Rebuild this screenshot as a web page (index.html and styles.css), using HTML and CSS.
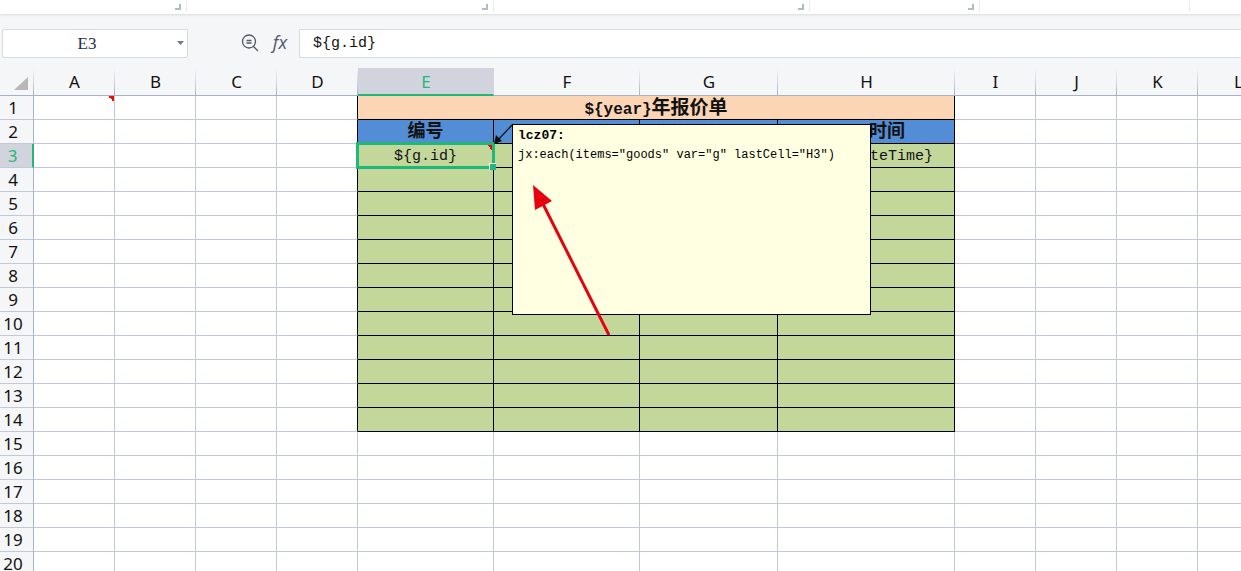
FILE: index.html
```html
<!DOCTYPE html>
<html lang="zh-CN">
<head>
<meta charset="utf-8">
<title>报价单</title>
<link rel="stylesheet" href="styles.css">
</head>
<body>
<div class="ribbon">
  <div class="group group-a"><i class="launcher"></i></div>
  <div class="group group-b"><i class="launcher"></i></div>
  <div class="group group-c"><i class="launcher"></i></div>
  <div class="group group-d"><i class="launcher"></i></div>
  <div class="group group-e"></div>
</div>
<div class="formula-bar">
  <div class="name-box">
    <input class="name-input" aria-label="名称框" value="E3">
    <button class="name-drop" aria-label="选择名称"><svg width="8" height="5" viewBox="0 0 8 5"><path d="M1 0h7L4.500 4z" fill="#6d7694"/></svg></button>
  </div>
  <div class="tools">
    <button class="tool" aria-label="查找"><svg width="18" height="18" viewBox="0 0 18 18" fill="none" stroke="#4f586e" stroke-width="1.3"><circle cx="8" cy="7.500" r="6.500"/><path d="M12.500 12.500l4.500 4.500M5.500 6.500h5M5.500 9h5"/></svg></button>
    <button class="tool fx" aria-label="插入函数">fx</button>
  </div>
  <input class="formula" aria-label="编辑栏" value="${g.id}">
</div>
<main class="sheet">
  <table class="grid">
    <colgroup><col class="c-head"><col class="c-std"><col class="c-std"><col class="c-std"><col class="c-std"><col class="c-e"><col class="c-f"><col class="c-g"><col class="c-h"><col class="c-std"><col class="c-std"><col class="c-std"><col class="c-std"></colgroup>
    <thead><tr><th class="corner"><svg width="14" height="14" viewBox="0 0 14 14"><path d="M14 0v13H0z" fill="#b8b8b8"/></svg></th><th>A</th><th>B</th><th>C</th><th>D</th><th class="active">E</th><th>F</th><th>G</th><th>H</th><th>I</th><th>J</th><th>K</th><th>L</th></tr></thead>
    <tbody>
      <tr><th>1</th><td class="noted"></td><td></td><td></td><td class="edge"></td><td class="title" colspan="4">${year}<span class="han">年报价单</span></td><td></td><td></td><td></td><td></td></tr>
      <tr><th>2</th><td></td><td></td><td></td><td class="edge"></td><td class="label"><span class="han">编号</span></td><td class="label"></td><td class="label"></td><td class="label tail-label"><span class="han">时间</span></td><td></td><td></td><td></td><td></td></tr>
      <tr><th class="active">3</th><td></td><td></td><td></td><td class="edge"></td><td class="item selected">${g.id}</td><td class="item"></td><td class="item"></td><td class="item tail-item">teTime}</td><td></td><td></td><td></td><td></td></tr>
    </tbody>
    <tbody id="rows"></tbody>
  </table>
  <svg class="pointer" width="20" height="22" viewBox="0 0 20 22"><path d="M19 1L4 17" stroke="#111" stroke-width="1.300"/><path d="M1 20l2-9 6 6z" fill="#111"/></svg>
  <aside class="note"><b>lcz07:</b><p>jx:each(items="goods" var="g" lastCell="H3")</p></aside>
  <svg class="arrow" width="80" height="152" viewBox="0 0 80 152"><path d="M13 19L79 150" stroke="#e60012" stroke-width="3"/><path d="M3 0l19 16-17 9z" fill="#e60012"/></svg>
</main>
<script src="sheet.js"></script>
</body>
</html>
```

FILE: styles.css
```css
* { box-sizing: border-box; }
body {
  margin: 0;
  height: 100vh;
  overflow: hidden;
  display: flex;
  flex-direction: column;
  background: #f5f6f8;
  font-family: "Noto Sans", "Noto Sans CJK SC", sans-serif;
  color: #111;
}
button, input { font: inherit; border: 0; padding: 0; margin: 0; background: none; color: inherit; outline: 0; }
button { display: flex; align-items: center; justify-content: center; }

.ribbon { display: flex; flex: none; height: 14px; background: #fff; box-shadow: 0 1px 2px #d9dadc; }
.group { display: flex; flex: none; justify-content: flex-end; height: 12px; padding: 4px 5px 0 0; border-right: 1px solid #ececee; }
.group-a { width: 187px; }
.group-b { width: 307px; }
.group-c { width: 316px; }
.group-d { width: 170px; }
.group-e { width: 210px; }
.launcher { width: 6px; height: 6px; border: solid #b3b9ce; border-width: 0 2px 2px 0; }

.formula-bar { display: flex; flex: none; align-items: flex-start; height: 54px; padding: 15px 0 0 2px; }
.name-box { display: flex; flex: none; width: 186px; height: 29px; background: #fff; border: 1px solid #d8dadf; border-radius: 2px; }
.name-input { flex: 1; min-width: 0; padding-right: 2px; text-align: center; font: 17px "Liberation Serif", serif; color: #262d3d; }
.name-drop { width: 14px; }
.tools { display: flex; flex: none; justify-content: flex-end; gap: 12px; width: 111px; height: 29px; padding-right: 10px; }
.tool { width: 18px; height: 28px; }
.fx { padding-bottom: 3px; font: italic 18px "Open Sans", sans-serif; color: #4f586e; }
.formula { flex: 1; min-width: 0; height: 29px; padding: 0 0 0 13px; background: #fff; border: 1px solid #d8dadf; border-right: 0; border-radius: 2px 0 0 2px; font: 15px "Liberation Mono", monospace; }

.sheet { position: relative; flex: 1; min-height: 0; overflow: hidden; }
.grid { width: 1279px; table-layout: fixed; border-collapse: separate; border-spacing: 0; background: #fff; }
.c-head { width: 34px; }
.c-std { width: 81px; }
.c-e { width: 136px; }
.c-f { width: 146px; }
.c-g { width: 138px; }
.c-h { width: 177px; }
.grid th, .grid td { height: 24px; padding: 0; overflow: hidden; white-space: nowrap; border: solid #c3c8d9; border-width: 0 1px 1px 0; line-height: 20px; }
.grid th { background: #f5f6f8; font-size: 17px; font-weight: 400; }
.grid thead th { height: 28px; padding-left: 1px; border-color: #a9b1c8; border-right-color: transparent; background: linear-gradient(#f5f6f8, #a9b1c8) right / 1px 100% no-repeat border-box, #f5f6f8; }
.grid tbody th { padding-right: 7px; border-right-color: #a9b1c8; }
.grid thead .active { padding-top: 1px; background: #d1d4dc; color: #1fb879; border-bottom: 2px solid #1fb879; }
.grid tbody .active { background: #d1d4dc; color: #1fb879; border-right: 2px solid #1fb879; }
.grid .corner { padding: 5px 5px 0 0; text-align: right; }
.corner svg { display: block; margin-left: auto; }

.grid td { padding-top: 3px; text-align: center; font: 15px/16px "Liberation Mono", "Noto Sans CJK SC", monospace; }
.grid .edge { border-right-color: #000; }
.grid .title, .grid .label, .grid .item { border-color: #000; }
.grid .title { background: #fcd5b4; font-size: 16px; font-weight: 700; }
.grid .label { background: #538dd5; font-weight: 700; }
.grid .item { background: #c4d79b; }
.han { font-size: 18px; }
.title .han { font-size: 19px; }
.grid .tail-label { padding-right: 49px; text-align: right; }
.grid .tail-item { padding-right: 21px; text-align: right; }
.noted { background: linear-gradient(to bottom left, #f00 50%, transparent 50%) right / 6px 6px no-repeat; background-position: right top; }
.grid .selected { position: relative; overflow: visible; background: linear-gradient(to bottom left, #f00 50%, transparent 50%) right 1px top 1px / 5px 5px no-repeat #c4d79b; }
.selected::before { content: ""; position: absolute; inset: -2px; border: 3px solid #1fb879; }
.selected::after { content: ""; position: absolute; right: -3px; bottom: -3px; width: 6px; height: 6px; background: #1fb879; border: solid #fff; border-width: 1px 0 0 1px; }

.pointer { position: absolute; left: 493px; top: 56px; }
.note { position: absolute; left: 512px; top: 56px; width: 359px; height: 191px; padding: 1px 5px; background: #ffffe1; border: 1px solid #000; font: 12px/19px "Liberation Mono", monospace; color: #000; }
.note b { font-size: 13px; }
.note p { margin: 0; white-space: nowrap; }
.arrow { position: absolute; left: 530px; top: 117px; }
```

FILE: sheet.js
```js
const rows = document.getElementById("rows");
for (let n = 4; n <= 20; n++) {
  const tr = rows.insertRow();
  const head = document.createElement("th");
  head.textContent = n;
  tr.append(head);
  for (let c = 0; c < 12; c++) {
    const cell = tr.insertCell();
    if (n <= 14 && c === 3) cell.className = "edge";
    if (n <= 14 && c > 3 && c < 8) cell.className = "item";
  }
}
```
